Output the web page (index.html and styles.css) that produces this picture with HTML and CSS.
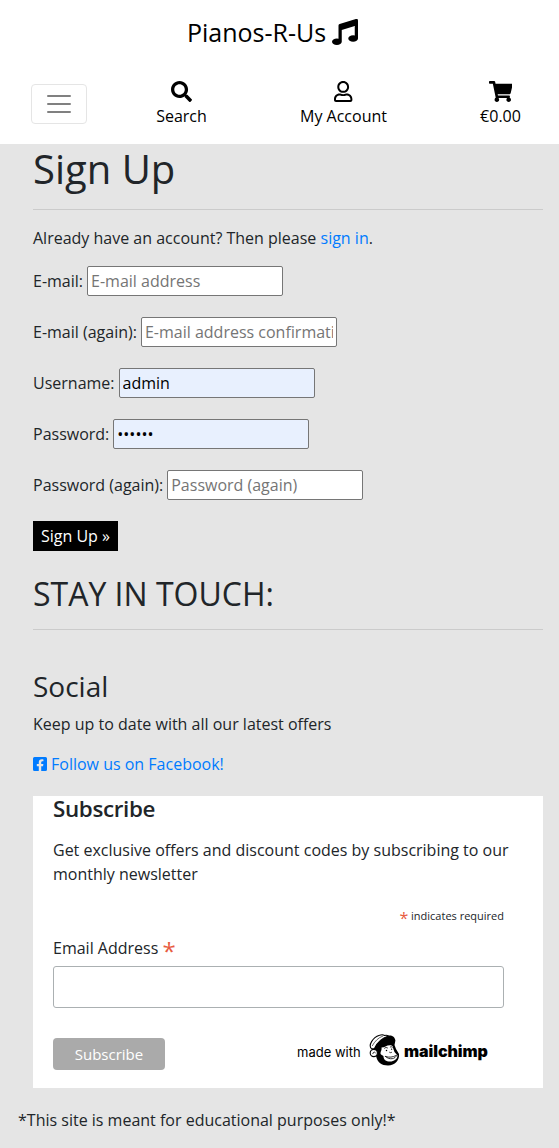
FILE: index.html
```html
<!DOCTYPE html>
<html lang="en">
<head>
<meta charset="utf-8">
<title>Pianos-R-Us</title>
<link rel="stylesheet" href="styles.css">
</head>
<body>
<header class="site-header">
  <a class="brand">Pianos-R-Us <svg class="brand-icon" viewBox="0 0 512 512"><path d="M470.38 1.51L150.41 96A32 32 0 0 0 128 126.51v261.41A139 139 0 0 0 96 384c-53 0-96 28.66-96 64s43 64 96 64 96-28.66 96-64V214.32l256-75v184.61a138.4 138.4 0 0 0-32-3.93c-53 0-96 28.66-96 64s43 64 96 64 96-28.65 96-64V32a32 32 0 0 0-41.62-30.49z"/></svg></a>
  <nav class="nav">
    <button class="toggler" aria-label="Menu"><svg viewBox="0 0 30 30"><path stroke="#808080" stroke-linecap="round" stroke-miterlimit="10" stroke-width="2" d="M4 7h22M4 15h22M4 23h22"/></svg></button>
    <a class="nav-item search"><svg viewBox="0 0 512 512"><path d="M505 442.7L405.3 343c-4.5-4.5-10.6-7-17-7H372c27.6-35.3 44-79.7 44-128C416 93.1 322.9 0 208 0S0 93.1 0 208s93.1 208 208 208c48.3 0 92.7-16.4 128-44v16.3c0 6.4 2.5 12.5 7 17l99.7 99.7c9.4 9.4 24.6 9.4 33.9 0l28.3-28.3c9.4-9.4 9.4-24.6.1-34zM208 336c-70.7 0-128-57.2-128-128 0-70.7 57.2-128 128-128 70.7 0 128 57.2 128 128 0 70.7-57.2 128-128 128z"/></svg><span>Search</span></a>
    <a class="nav-item account"><svg viewBox="0 0 448 512"><path d="M313.6 304c-28.7 0-42.5 16-89.6 16-47.1 0-60.8-16-89.6-16C60.2 304 0 364.2 0 438.4V464c0 26.5 21.5 48 48 48h352c26.5 0 48-21.5 48-48v-25.6c0-74.2-60.2-134.4-134.4-134.4zM400 464H48v-25.6c0-47.6 38.8-86.4 86.4-86.4 14.6 0 38.3 16 89.6 16 51.7 0 74.9-16 89.6-16 47.6 0 86.4 38.8 86.4 86.4V464zM224 288c79.5 0 144-64.5 144-144S303.5 0 224 0 80 64.5 80 144s64.5 144 144 144zm0-240c52.9 0 96 43.1 96 96s-43.1 96-96 96-96-43.1-96-96 43.1-96 96-96z"/></svg><span>My Account</span></a>
    <a class="nav-item cart"><svg viewBox="0 0 576 512"><path d="M528.12 301.319l47.273-208C578.806 78.301 567.391 64 551.99 64H159.208l-9.166-44.81C147.758 8.021 137.93 0 126.529 0H24C10.745 0 0 10.745 0 24v16c0 13.255 10.745 24 24 24h69.883l70.248 343.435C147.325 417.1 136 435.222 136 456c0 30.928 25.072 56 56 56s56-25.072 56-56c0-15.674-6.447-29.835-16.824-40h209.647C430.447 426.165 424 440.326 424 456c0 30.928 25.072 56 56 56s56-25.072 56-56c0-22.172-12.888-41.332-31.579-50.405l5.517-24.276c3.413-15.018-8.002-29.319-23.403-29.319H218.117l-6.545-32h293.145c11.206 0 20.92-7.754 23.403-18.681z"/></svg><span>€0.00</span></a>
  </nav>
</header>
<main class="content">
  <h1>Sign Up</h1>
  <hr>
  <p class="intro">Already have an account? Then please <a class="link">sign in</a>.</p>
  <form class="signup">
    <div class="field"><label>E-mail:</label><input type="email" placeholder="E-mail address"></div>
    <div class="field"><label>E-mail (again):</label><input type="email" placeholder="E-mail address confirmation"></div>
    <div class="field"><label>Username:</label><input class="filled" type="text" value="admin"></div>
    <div class="field"><label>Password:</label><input class="filled" type="password" value="secret"></div>
    <div class="field"><label>Password (again):</label><input type="password" placeholder="Password (again)"></div>
    <button class="signup-btn" type="button">Sign Up »</button>
  </form>
  <h2>STAY IN TOUCH:</h2>
  <hr>
  <h3>Social</h3>
  <p class="social-text">Keep up to date with all our latest offers</p>
  <a class="link facebook"><svg viewBox="0 0 448 512"><path d="M400 32H48A48 48 0 0 0 0 80v352a48 48 0 0 0 48 48h137.25V327.69h-63V256h63v-54.64c0-62.15 37-96.48 93.67-96.48 27.14 0 55.52 4.84 55.52 4.84v61h-31.27c-30.81 0-40.42 19.12-40.42 38.73V256h68.78l-11 71.69h-57.78V480H400a48 48 0 0 0 48-48V80a48 48 0 0 0-48-48z"/></svg><span>Follow us on Facebook!</span></a>
  <section class="subscribe">
    <h4>Subscribe</h4>
    <p class="pitch">Get exclusive offers and discount codes by subscribing to our monthly newsletter</p>
    <div class="required"><span class="star">*</span> indicates required</div>
    <label class="email-label">Email Address <span class="star big">*</span></label>
    <input class="email-input" type="email">
    <div class="actions">
      <button class="subscribe-btn" type="button">Subscribe</button>
      <a class="mailchimp">
        <span class="made">made with</span>
        <svg class="freddie" viewBox="0 0 31 33">
          <path d="M5 14C8 7 13 3 19 1.6c4-.6 7 1.4 7.4 5L25.5 11l1.5 4 3 5c.8 6-4 11.500-11 11.500-6.500 0-10.500-3.500-11.700-8.500z"/>
          <path d="M2.500 14.800C-1 11.500 3.500 3.500 10.500 1.200c2.500-.9 4-.5 5 .3 1.500-.4 3-.2 4 .6C13.500 4 8 9 5.500 14.500z" fill="#fff" stroke="#000" stroke-width="1.100" stroke-linejoin="round"/>
          <path d="M3.200 12C5.500 7.500 9.500 3.500 14 2" fill="none" stroke="#000" stroke-width=".6"/>
          <circle cx="4.800" cy="19" r="3.600" fill="#fff" stroke="#000" stroke-width="1.100"/>
          <path d="M3.800 20c0-2 2-2.500 2.800-1" fill="none" stroke="#000" stroke-width=".8"/>
          <path d="M12.500 13.500c3.500 0 5-2.800 9.500-2.300 1.500.3 2 1.500 2.200 3.300l1.300 3.500 3 3.500c0 3.500-3.500 6-7.500 6-4 0-6.500-2-6.500-5 0-1.500-2.500-1-3-3 0-2.500 1.500-3 1-6z" fill="#fff"/>
          <path d="M15.500 14.200c1-.9 2-.9 3-.3m2.800-.9c.8-.5 1.500-.3 2 .2M20.500 18.300c.6.600 1.600.500 2.200 0M16.500 22.500c4 1.300 7 .7 11-1.200-.8 3.500-7 5.200-11 1.200z" fill="none" stroke="#000" stroke-width=".8" stroke-linecap="round"/>
          <circle cx="17.500" cy="16.500" r=".75"/><circle cx="22.600" cy="15.200" r=".65"/>
        </svg>
        <span class="wordmark">mailchimp</span>
      </a>
    </div>
  </section>
</main>
<footer class="footer">*This site is meant for educational purposes only!*</footer>
</body>
</html>
```
FILE: styles.css
```css
* { box-sizing: border-box; }
body {
  margin: 0;
  min-height: 1148px;
  background: #e5e5e5;
  color: #212529;
  font: 400 16px/24px "Open Sans", sans-serif;
}
h1, h2, h3, h4, p { margin: 0; font-weight: 400; }
input, button { font: inherit; margin: 0; }
svg { fill: currentColor; display: block; }
hr { height: 1px; margin: 0; border: 0; background: #cbcbcb; }
.link { color: #007bff; }
.site-header { height: 144px; background: #fff; color: #000; }
.brand {
  display: flex;
  justify-content: center;
  gap: 6px;
  padding: 13px 14px 0 0;
  height: 79px;
  font-size: 25px;
  line-height: 38px;
}
.brand-icon { width: 26px; height: 26px; margin-top: 6px; }
.nav { display: flex; padding-left: 31px; }
.toggler {
  width: 56px;
  height: 40px;
  margin-top: 5px;
  padding: 4px 12px;
  background: #fff;
  border: 1px solid #e5e5e5;
  border-radius: 4px;
}
.toggler svg { width: 30px; height: 30px; fill: none; }
.nav-item { display: flex; flex-direction: column; align-items: center; white-space: nowrap; }
.nav-item svg { height: 21px; margin: 2px 0 2px; }
.search { width: 51px; margin-left: 69px; }
.account { width: 87px; margin-left: 93px; }
.cart { width: 41px; margin-left: 93px; }
.content { padding: 0 16px 0 33px; }
h1 { height: 65px; padding-top: 1px; font-size: 40px; line-height: 48px; }
.intro { margin-top: 16px; }
.signup { padding-top: 16px; }
.field { display: flex; gap: 4px; height: 30px; margin-bottom: 21px; line-height: 30px; }
.field input {
  width: 196px;
  height: 30px;
  padding: 1px 3px;
  border: 1px solid #767676;
  border-radius: 2px;
  background: #fff;
  color: #212529;
}
.field .filled { background: #e8f0fe; color: #000; }
input::placeholder { color: #757575; opacity: 1; }
.signup-btn {
  display: block;
  width: 85px;
  height: 30px;
  padding: 0;
  border: 0;
  background: #000;
  color: #fff;
}
h2 { height: 78px; padding-top: 24px; font-size: 32px; line-height: 38px; }
h3 { margin-top: 39px; font-size: 28px; line-height: 34px; }
.social-text { margin-top: 9px; }
.facebook { display: flex; gap: 4px; margin-top: 16px; height: 44px; }
.facebook svg { width: 14px; height: 16px; margin-top: 4px; }
.subscribe { height: 292px; padding: 0 20px; background: #fff; }
h4 { font-size: 22.4px; line-height: 26px; font-weight: 600; letter-spacing: -.35px; }
.pitch { margin-top: 16px; }
.required { margin: 18px 19px 0 0; text-align: right; font-size: 11px; line-height: 24px; }
.star { color: #e85c41; font-size: 16px; line-height: 1; vertical-align: -4px; }
.star.big { font-size: 24px; vertical-align: -6px; }
.email-label { display: block; height: 24px; margin-top: 8px; line-height: 24px; }
.email-input {
  display: block;
  width: 451px;
  height: 42px;
  margin-top: 6px;
  border: 1px solid #abb0b2;
  border-radius: 3px;
}
.actions { display: flex; margin-top: 26px; }
.subscribe-btn {
  width: 112px;
  height: 32px;
  margin-top: 4px;
  padding: 0;
  border: 0;
  border-radius: 4px;
  background: #aaa;
  color: #fff;
  font-size: 15px;
}
.mailchimp { display: flex; margin-left: 132px; color: #000; }
.made { width: 72px; padding-top: 6px; font: 400 13px/24px Inter, sans-serif; }
.freddie { width: 31px; height: 33px; }
.wordmark { margin-left: 4px; padding-top: 5px; font: 900 16px/24px Inter, sans-serif; letter-spacing: -.05px; }
.footer { padding: 20px 18px 0; }
```
